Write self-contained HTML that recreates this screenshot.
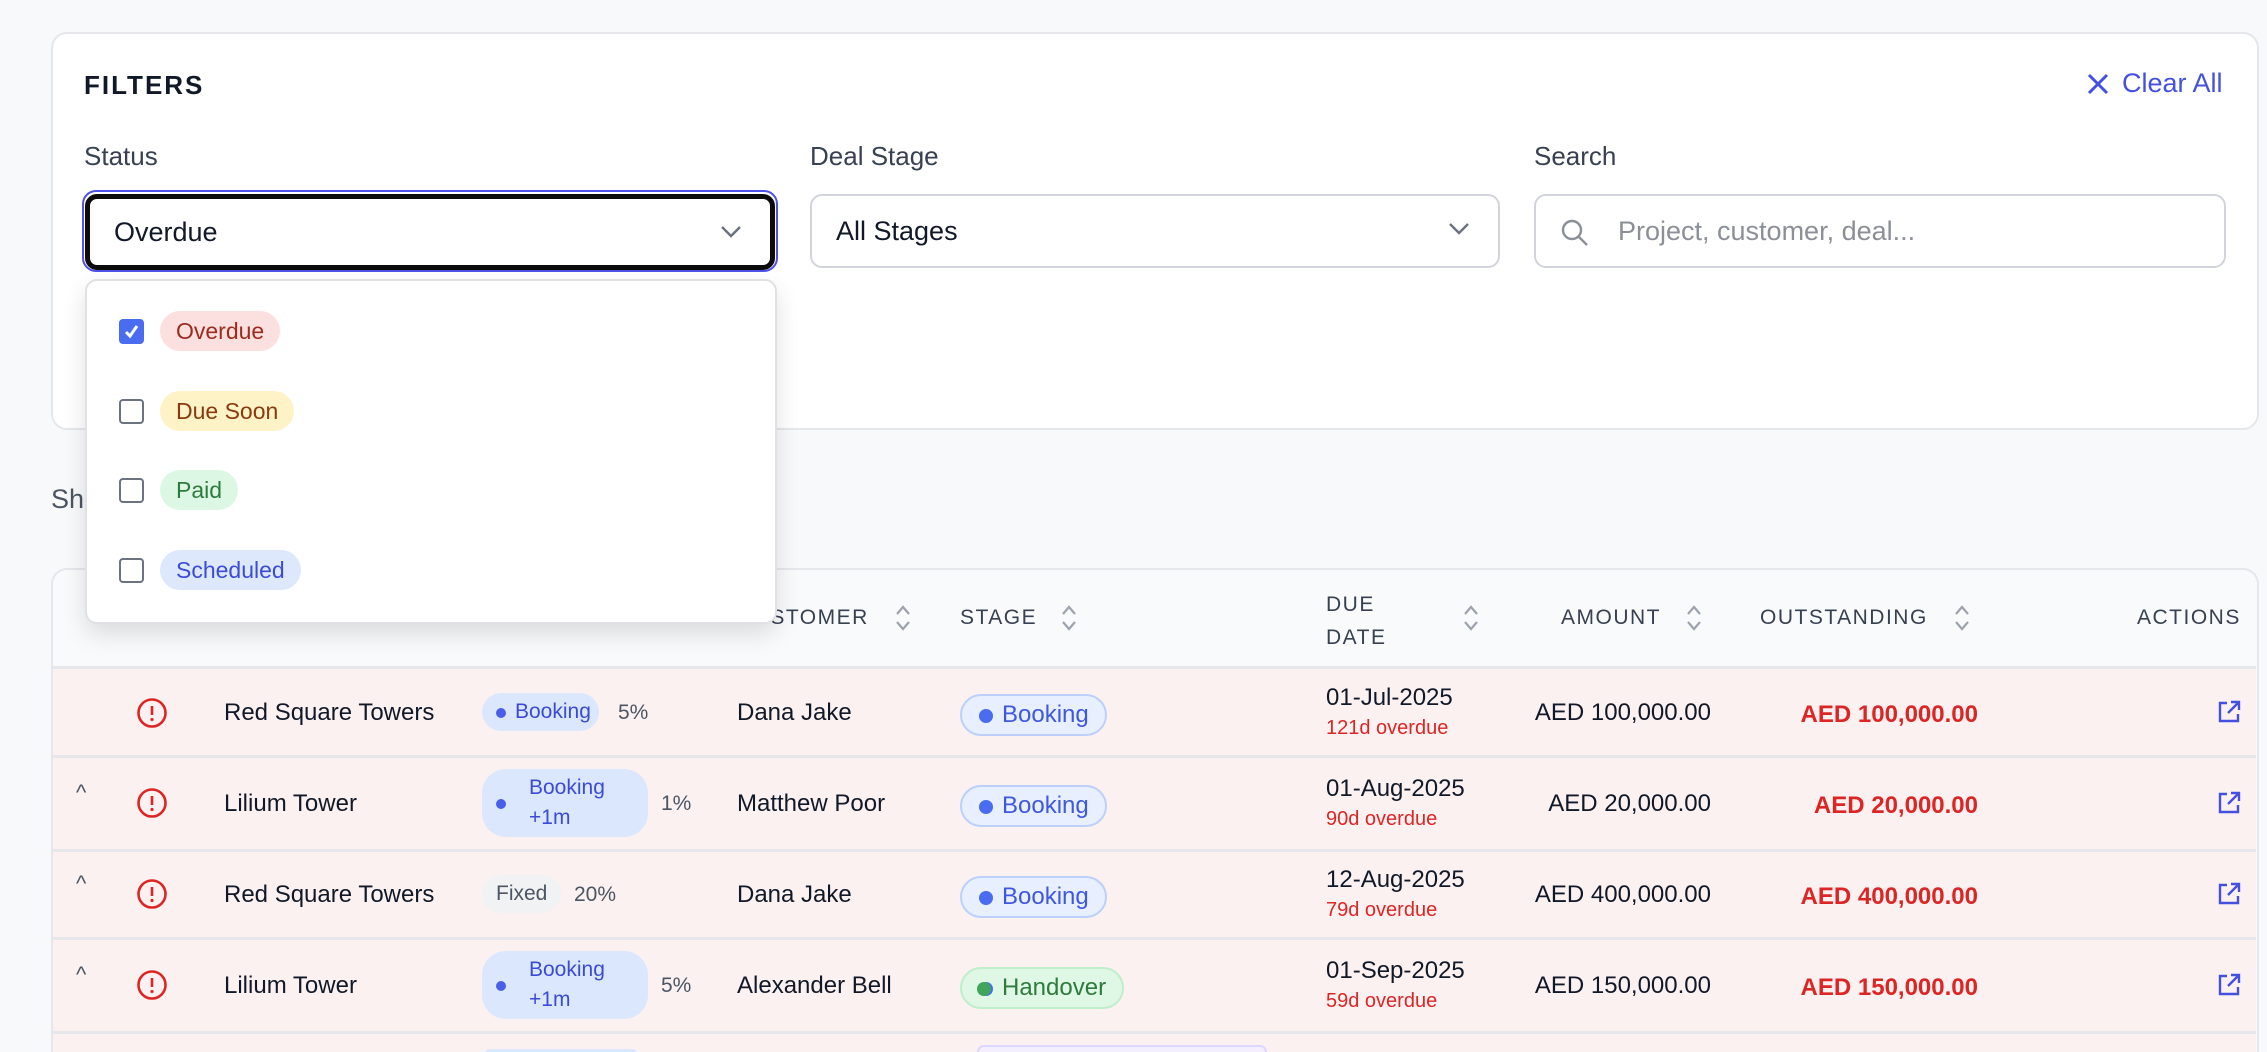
<!DOCTYPE html>
<html style="width:2267px;height:1052px;overflow:hidden"><head><meta charset="utf-8"><style>
*{box-sizing:border-box;margin:0;padding:0}
body{width:2267px;height:1052px;overflow:hidden;background:#f8f9fb;font-family:"Liberation Sans",Arial,sans-serif;position:relative;color:#111827}
.abs{position:absolute}
.card{position:absolute;background:#fff;border:2px solid #e5e7eb;border-radius:16px}
.lbl{position:absolute;font-size:26px;color:#374151;top:141px}
.sel{position:absolute;top:194px;height:74px;border:2px solid #d1d5db;border-radius:12px;background:#fff;font-size:27px;line-height:70px;padding-left:24px;color:#111827}
.chev{position:absolute;right:28px;top:26px}
.item{position:absolute;left:119px;height:40px;display:flex;align-items:center}
.cb{width:25px;height:25px;border:2px solid #6b7280;border-radius:4px;background:#fff;margin-right:16px}
.pill{height:40px;border-radius:20px;padding:0 16px;font-size:23px;line-height:40px}
.th{position:absolute;font-size:21px;letter-spacing:1.5px;color:#374151;top:606px}
.row{position:absolute;left:53px;width:2203px;background:#fbf1f0;border-top:3px solid #e5e7eb}
.cell{position:absolute;font-size:24px;color:#111827}
.pp{position:absolute;background:#dbe7fd;color:#3b4bd6;font-size:21px;border-radius:24px}
.sp{position:absolute;height:42px;border:2px solid #bcd0fb;background:#e8effe;color:#3f58e0;border-radius:21px;font-size:24px;line-height:38px;padding:0 16px 0 40px}
.sp:before{content:"";position:absolute;left:17px;top:13px;width:14px;height:14px;border-radius:50%;background:#4a6cf0}
.red{color:#dc2626}
</style></head><body>

<div class="card" style="left:51px;top:32px;width:2208px;height:398px"></div>
<div class="abs" style="left:84px;top:70px;font-size:26px;font-weight:bold;letter-spacing:2px;color:#111827">FILTERS</div>
<div class="abs" style="left:2086px;top:68px;font-size:27px;color:#4450e0;display:flex;align-items:center">
<svg width="24" height="24" viewBox="0 0 24 24" style="margin-right:12px"><path d="M3 3L21 21M21 3L3 21" stroke="#4450e0" stroke-width="3" fill="none"/></svg>Clear All</div>

<div class="lbl" style="left:84px">Status</div>
<div class="lbl" style="left:810px">Deal Stage</div>
<div class="lbl" style="left:1534px">Search</div>

<div class="abs" style="left:82px;top:190px;width:696px;height:82px;border:2px solid #4f52e8;border-radius:14px"></div>
<div class="sel" style="left:85px;width:690px;border:5px solid #0b0b0b;top:194px;height:76px;line-height:66px">Overdue
<svg class="chev" width="22" height="14" viewBox="0 0 22 14" style="top:26px"><path d="M2 2L11 11L20 2" stroke="#6b7280" stroke-width="2.4" fill="none"/></svg></div>
<div class="sel" style="left:810px;width:690px">All Stages
<svg class="chev" width="22" height="14" viewBox="0 0 22 14"><path d="M2 2L11 11L20 2" stroke="#6b7280" stroke-width="2.4" fill="none"/></svg></div>
<div class="sel" style="left:1534px;width:692px;padding-left:82px;color:#8b8f97">Project, customer, deal...
<svg class="abs" style="left:24px;top:22px" width="30" height="30" viewBox="0 0 30 30"><circle cx="12" cy="12" r="9" stroke="#8b8f97" stroke-width="2.4" fill="none"/><path d="M19 19L27 27" stroke="#8b8f97" stroke-width="2.4"/></svg></div>

<div class="abs" style="left:51px;top:484px;font-size:27px;color:#4b5563">Sh</div>

<div class="card" style="left:51px;top:568px;width:2208px;height:484px;background:#f9fafb;border-bottom:none;border-radius:16px 16px 0 0"></div>
<div class="th" style="left:225px">PROJECT</div>
<div class="th" style="left:481px">PAYMENT</div>
<div class="th" style="left:737px">CUSTOMER</div>
<div class="th" style="left:960px">STAGE</div>
<div class="th" style="left:1326px;top:588px;line-height:33px">DUE<br>DATE</div>
<div class="th" style="left:1561px">AMOUNT</div>
<div class="th" style="left:1760px">OUTSTANDING</div>
<div class="th" style="left:2137px">ACTIONS</div>
<svg class="abs" style="left:894px;top:604px" width="18" height="28" viewBox="0 0 18 28"><path d="M3 10L9 3L15 10M3 18L9 25L15 18" stroke="#9ca3af" stroke-width="2.2" fill="none"/></svg>
<svg class="abs" style="left:1060px;top:604px" width="18" height="28" viewBox="0 0 18 28"><path d="M3 10L9 3L15 10M3 18L9 25L15 18" stroke="#9ca3af" stroke-width="2.2" fill="none"/></svg>
<svg class="abs" style="left:1462px;top:604px" width="18" height="28" viewBox="0 0 18 28"><path d="M3 10L9 3L15 10M3 18L9 25L15 18" stroke="#9ca3af" stroke-width="2.2" fill="none"/></svg>
<svg class="abs" style="left:1685px;top:604px" width="18" height="28" viewBox="0 0 18 28"><path d="M3 10L9 3L15 10M3 18L9 25L15 18" stroke="#9ca3af" stroke-width="2.2" fill="none"/></svg>
<svg class="abs" style="left:1953px;top:604px" width="18" height="28" viewBox="0 0 18 28"><path d="M3 10L9 3L15 10M3 18L9 25L15 18" stroke="#9ca3af" stroke-width="2.2" fill="none"/></svg>

<div class="row" style="top:666px;height:90px"></div>
<div class="row" style="top:755px;height:96px"></div>
<div class="row" style="top:849px;height:91px"></div>
<div class="row" style="top:937px;height:96px"></div>
<div class="row" style="top:1031px;height:21px"></div>

<svg class="abs" style="left:136px;top:697px" width="32" height="32" viewBox="0 0 32 32"><circle cx="16" cy="16" r="13.5" stroke="#dc2626" stroke-width="2.6" fill="none"/><path d="M16 9V18" stroke="#dc2626" stroke-width="2.6"/><circle cx="16" cy="22.5" r="1.6" fill="#dc2626"/></svg>
<div class="cell" style="left:224px;top:699px">Red Square Towers</div>
<div class="pp" style="left:482px;top:693px;height:38px;line-height:38px;padding:0 8px 0 33px">Booking<span class="abs" style="left:14px;top:15px;width:10px;height:10px;border-radius:50%;background:#4a5ee8"></span></div>
<div class="cell" style="left:618px;top:701px;font-size:21px;color:#4b5563">5%</div>
<div class="cell" style="left:737px;top:699px">Dana Jake</div>
<div class="sp" style="left:960px;top:694px">Booking</div>
<div class="cell" style="left:1326px;top:684px">01-Jul-2025</div>
<div class="cell red" style="left:1326px;top:717px;font-size:20px">121d overdue</div>
<div class="cell" style="left:1500px;width:211px;text-align:right;top:699px">AED 100,000.00</div>
<div class="cell red" style="left:1700px;width:278px;text-align:right;top:701px;font-weight:bold">AED 100,000.00</div>

<div class="cell" style="left:76px;top:780px;font-size:22px;color:#4b5563">^</div>
<svg class="abs" style="left:136px;top:787px" width="32" height="32" viewBox="0 0 32 32"><circle cx="16" cy="16" r="13.5" stroke="#dc2626" stroke-width="2.6" fill="none"/><path d="M16 9V18" stroke="#dc2626" stroke-width="2.6"/><circle cx="16" cy="22.5" r="1.6" fill="#dc2626"/></svg>
<div class="cell" style="left:224px;top:790px">Lilium Tower</div>
<div class="pp" style="left:482px;top:769px;width:166px;height:68px;line-height:30px;padding:4px 0 0 47px">Booking<br>+1m<span class="abs" style="left:14px;top:30px;width:10px;height:10px;border-radius:50%;background:#4a5ee8"></span></div>
<div class="cell" style="left:661px;top:792px;font-size:21px;color:#4b5563">1%</div>
<div class="cell" style="left:737px;top:790px">Matthew Poor</div>
<div class="sp" style="left:960px;top:785px">Booking</div>
<div class="cell" style="left:1326px;top:775px">01-Aug-2025</div>
<div class="cell red" style="left:1326px;top:808px;font-size:20px">90d overdue</div>
<div class="cell" style="left:1500px;width:211px;text-align:right;top:790px">AED 20,000.00</div>
<div class="cell red" style="left:1700px;width:278px;text-align:right;top:792px;font-weight:bold">AED 20,000.00</div>

<div class="cell" style="left:76px;top:871px;font-size:22px;color:#4b5563">^</div>
<svg class="abs" style="left:136px;top:878px" width="32" height="32" viewBox="0 0 32 32"><circle cx="16" cy="16" r="13.5" stroke="#dc2626" stroke-width="2.6" fill="none"/><path d="M16 9V18" stroke="#dc2626" stroke-width="2.6"/><circle cx="16" cy="22.5" r="1.6" fill="#dc2626"/></svg>
<div class="cell" style="left:224px;top:881px">Red Square Towers</div>
<div class="pp" style="left:482px;top:875px;height:38px;line-height:38px;padding:0 14px;background:#f1f2f3;color:#4b5563">Fixed</div>
<div class="cell" style="left:574px;top:883px;font-size:21px;color:#4b5563">20%</div>
<div class="cell" style="left:737px;top:881px">Dana Jake</div>
<div class="sp" style="left:960px;top:876px">Booking</div>
<div class="cell" style="left:1326px;top:866px">12-Aug-2025</div>
<div class="cell red" style="left:1326px;top:899px;font-size:20px">79d overdue</div>
<div class="cell" style="left:1500px;width:211px;text-align:right;top:881px">AED 400,000.00</div>
<div class="cell red" style="left:1700px;width:278px;text-align:right;top:883px;font-weight:bold">AED 400,000.00</div>

<div class="cell" style="left:76px;top:962px;font-size:22px;color:#4b5563">^</div>
<svg class="abs" style="left:136px;top:969px" width="32" height="32" viewBox="0 0 32 32"><circle cx="16" cy="16" r="13.5" stroke="#dc2626" stroke-width="2.6" fill="none"/><path d="M16 9V18" stroke="#dc2626" stroke-width="2.6"/><circle cx="16" cy="22.5" r="1.6" fill="#dc2626"/></svg>
<div class="cell" style="left:224px;top:972px">Lilium Tower</div>
<div class="pp" style="left:482px;top:951px;width:166px;height:68px;line-height:30px;padding:4px 0 0 47px">Booking<br>+1m<span class="abs" style="left:14px;top:30px;width:10px;height:10px;border-radius:50%;background:#4a5ee8"></span></div>
<div class="cell" style="left:661px;top:974px;font-size:21px;color:#4b5563">5%</div>
<div class="cell" style="left:737px;top:972px">Alexander Bell</div>
<div class="sp" style="left:960px;top:967px;border-color:#bfeecb;background:#dff7e5;color:#2f7a3d">Handover</div>
<span class="abs" style="left:977px;top:982px;width:14px;height:14px;border-radius:50%;background:#3fa55a"></span>
<div class="cell" style="left:1326px;top:957px">01-Sep-2025</div>
<div class="cell red" style="left:1326px;top:990px;font-size:20px">59d overdue</div>
<div class="cell" style="left:1500px;width:211px;text-align:right;top:972px">AED 150,000.00</div>
<div class="cell red" style="left:1700px;width:278px;text-align:right;top:974px;font-weight:bold">AED 150,000.00</div>

<div class="abs" style="left:486px;top:1049px;width:150px;height:3px;border-radius:20px 20px 0 0;background:#dbe7fd"></div>
<div class="abs" style="left:977px;top:1045px;width:290px;height:7px;border-radius:20px 20px 0 0;border:2px solid #ddd6fe;border-bottom:none;background:#f3efff"></div>

<svg class="abs" style="left:2216px;top:699px" width="26" height="26" viewBox="0 0 26 26"><path d="M11 4H4V22H22V15M15 3H23V11M23 3L12 14" stroke="#4450e0" stroke-width="2.4" fill="none"/></svg>
<svg class="abs" style="left:2216px;top:790px" width="26" height="26" viewBox="0 0 26 26"><path d="M11 4H4V22H22V15M15 3H23V11M23 3L12 14" stroke="#4450e0" stroke-width="2.4" fill="none"/></svg>
<svg class="abs" style="left:2216px;top:881px" width="26" height="26" viewBox="0 0 26 26"><path d="M11 4H4V22H22V15M15 3H23V11M23 3L12 14" stroke="#4450e0" stroke-width="2.4" fill="none"/></svg>
<svg class="abs" style="left:2216px;top:972px" width="26" height="26" viewBox="0 0 26 26"><path d="M11 4H4V22H22V15M15 3H23V11M23 3L12 14" stroke="#4450e0" stroke-width="2.4" fill="none"/></svg>

<div class="abs" style="left:85px;top:279px;width:692px;height:345px;background:#fff;border:2px solid #dfe1e5;border-radius:12px;box-shadow:0 10px 24px rgba(0,0,0,0.12)"></div>
<div class="item" style="top:311px"><div class="cb" style="background:#4a6cf0;border-color:#4a6cf0;position:relative"><svg class="abs" style="left:2px;top:2px" width="17" height="17" viewBox="0 0 17 17"><path d="M3 9L7 13L14 3" stroke="#fff" stroke-width="3" fill="none"/></svg></div><div class="pill" style="background:#fbe0df;color:#9b2c1e">Overdue</div></div>
<div class="item" style="top:391px"><div class="cb"></div><div class="pill" style="background:#fdf3c7;color:#8a3a0f">Due Soon</div></div>
<div class="item" style="top:470px"><div class="cb"></div><div class="pill" style="background:#dcf8e4;color:#2f7a3d">Paid</div></div>
<div class="item" style="top:550px"><div class="cb"></div><div class="pill" style="background:#dde8fd;color:#3b4bd6">Scheduled</div></div>

</body></html>
